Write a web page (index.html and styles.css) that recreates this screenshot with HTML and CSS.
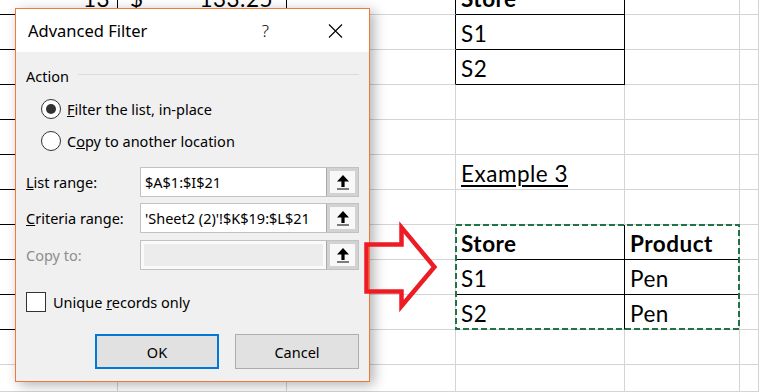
FILE: index.html
```html
<!DOCTYPE html>
<html lang="en">

<head>
    <meta charset="utf-8" />
    <title>Advanced Filter</title>
    <link rel="stylesheet" href="styles.css">
</head>

<body>
    <!-- worksheet -->
    <div class="sheet">
        <div class="cell bk num">13</div>
        <div class="cell bk acct"><span>$</span><span>133.25</span></div>
        <div class="cell bk_r"></div>
        <div class="cell bk bold">Store</div>
        <div class="cell"></div>
        <div class="cell"></div>

        <div class="cell bk"></div>
        <div class="cell bk"></div>
        <div class="cell bk_r"></div>
        <div class="cell bk">S1</div>
        <div class="cell"></div>
        <div class="cell"></div>

        <div class="cell bk"></div>
        <div class="cell bk"></div>
        <div class="cell bk_r"></div>
        <div class="cell bk">S2</div>
        <div class="cell"></div>
        <div class="cell"></div>

        <div class="cell bk"></div>
        <div class="cell bk"></div>
        <div class="cell"></div>
        <div class="cell"></div>
        <div class="cell"></div>
        <div class="cell"></div>

        <div class="cell bk"></div>
        <div class="cell bk"></div>
        <div class="cell"></div>
        <div class="cell"></div>
        <div class="cell"></div>
        <div class="cell"></div>

        <div class="cell bk"></div>
        <div class="cell bk"></div>
        <div class="cell"></div>
        <div class="cell"><u class="heading">Example 3</u></div>
        <div class="cell"></div>
        <div class="cell"></div>

        <div class="cell bk"></div>
        <div class="cell bk"></div>
        <div class="cell"></div>
        <div class="cell"></div>
        <div class="cell"></div>
        <div class="cell"></div>

        <div class="cell bk"></div>
        <div class="cell bk"></div>
        <div class="cell"></div>
        <div class="cell bk bold">Store</div>
        <div class="cell bk_b bold">Product</div>
        <div class="cell"></div>

        <div class="cell bk"></div>
        <div class="cell bk"></div>
        <div class="cell"></div>
        <div class="cell bk">S1</div>
        <div class="cell bk_b">Pen</div>
        <div class="cell"></div>

        <div class="cell bk"></div>
        <div class="cell bk"></div>
        <div class="cell"></div>
        <div class="cell bk_r">S2</div>
        <div class="cell">Pen</div>
        <div class="cell"></div>

        <div class="cell"></div>
        <div class="cell"></div>
        <div class="cell"></div>
        <div class="cell"></div>
        <div class="cell"></div>
        <div class="cell"></div>

        <div class="cell"></div>
        <div class="cell"></div>
        <div class="cell"></div>
        <div class="cell"></div>
        <div class="cell"></div>
        <div class="cell"></div>
    </div>

    <!-- copied range marquee -->
    <svg class="marquee" width="286" height="108" viewBox="0 0 286 108">
        <rect x="1" y="1" width="283" height="104" fill="none" stroke="#217346" stroke-width="2" stroke-dasharray="6 3" />
    </svg>

    <!-- dialog -->
    <div class="dialog">
        <div class="dlg_title">
            <h1>Advanced Filter</h1>
            <span class="help">?</span>
            <svg class="close" width="15" height="14" viewBox="0 0 15 14">
                <path d="M1 0.5 L14 13.5 M14 0.5 L1 13.5" stroke="#000" stroke-width="1.1" fill="none" />
            </svg>
        </div>
        <div class="dlg_body">
            <div class="group_head">
                <span>Action</span>
                <i class="group_line"></i>
            </div>
            <label class="radio_row first">
                <span class="radio checked"></span>
                <span><u>F</u>ilter the list, in-place</span>
            </label>
            <label class="radio_row">
                <span class="radio"></span>
                <span>C<u>o</u>py to another location</span>
            </label>

            <div class="field first">
                <span class="field_label"><u>L</u>ist range:</span>
                <div class="ref_box">
                    <span class="ref_text">$A$1:$I$21</span>
                    <span class="ref_btn"><i><svg width="12" height="15" viewBox="0 0 12 15"><path d="M6 0 L12 6.5 L0 6.5 Z M4.4 6 H7.6 V12 H4.4 Z M0 13.5 H12 V14.5 H0 Z" fill="#000" /></svg></i></span>
                </div>
            </div>
            <div class="field">
                <span class="field_label"><u>C</u>riteria range:</span>
                <div class="ref_box">
                    <span class="ref_text">'Sheet2 (2)'!$K$19:$L$21</span>
                    <span class="ref_btn"><i><svg width="12" height="15" viewBox="0 0 12 15"><path d="M6 0 L12 6.5 L0 6.5 Z M4.4 6 H7.6 V12 H4.4 Z M0 13.5 H12 V14.5 H0 Z" fill="#000" /></svg></i></span>
                </div>
            </div>
            <div class="field last">
                <span class="field_label disabled">Copy to:</span>
                <div class="ref_box off">
                    <span class="ref_text"><i class="ref_fill"></i></span>
                    <span class="ref_btn"><i><svg width="12" height="15" viewBox="0 0 12 15"><path d="M6 0 L12 6.5 L0 6.5 Z M4.4 6 H7.6 V12 H4.4 Z M0 13.5 H12 V14.5 H0 Z" fill="#000" /></svg></i></span>
                </div>
            </div>

            <label class="check_row">
                <span class="check"></span>
                <span>Unique <u>r</u>ecords only</span>
            </label>

            <div class="btn_row">
                <button class="btn default">OK</button>
                <button class="btn">Cancel</button>
            </div>
        </div>
    </div>

    <!-- annotation arrow -->
    <svg class="arrow" width="85" height="105" viewBox="0 0 85 105">
        <path d="M6.5 29.5 L41.5 29.5 L41.5 12.4 L74.4 52 L41.5 91 L41.5 76.5 L6.5 76.5 Z" fill="none" stroke="#ed1c24" stroke-width="4.5" />
    </svg>
</body>

</html>
```

FILE: styles.css
```css
* {
    box-sizing: border-box;
}

html,
body {
    margin: 0;
    padding: 0;
    width: 759px;
    height: 392px;
    overflow: hidden;
    background-color: #fff;
}

body {
    position: relative;
}

/* worksheet */

.sheet {
    display: grid;
    grid-template-columns: 118px 169px 169px 169px 115px 1fr;
    grid-template-rows: 15px repeat(10, 35px) 1fr;
    height: 392px;
    font-family: Lato, "Liberation Sans", sans-serif;
    font-size: 22.5px;
    letter-spacing: 0.5px;
    color: #000;
}

.cell {
    display: flex;
    align-items: flex-end;
    padding: 0 5px 4px;
    line-height: 22px;
    white-space: nowrap;
    overflow: hidden;
    border-right: 1px solid #d4d4d4;
    border-bottom: 1px solid #d4d4d4;
}

.bk {
    border-right-color: #000;
    border-bottom-color: #000;
}

.bk_r {
    border-right-color: #000;
}

.bk_b {
    border-bottom-color: #000;
}

.num {
    justify-content: flex-end;
    padding-right: 7px;
}

.acct {
    justify-content: space-between;
    padding-left: 12px;
    padding-right: 13px;
}

.bold {
    font-weight: 700;
}

.heading {
    text-decoration-thickness: 2px;
    text-underline-offset: 3px;
}

.marquee {
    position: absolute;
    left: 455px;
    top: 224px;
}

/* dialog */

.dialog {
    position: absolute;
    left: 15px;
    top: 8px;
    width: 355px;
    border: 1px solid #f0783a;
    background-color: #f0f0f0;
    box-shadow: 4px 3px 12px rgba(0, 0, 0, 0.3);
    font-family: "Noto Sans", "Open Sans", sans-serif;
    font-size: 14.5px;
    color: #000;
    z-index: 5;
}

.dlg_title {
    height: 43px;
    display: flex;
    align-items: center;
    padding-left: 12px;
    background-color: #fff;
}

.dlg_title h1 {
    flex: 1;
    margin: 0;
    font-size: 16.5px;
    font-weight: normal;
}

.help {
    font-size: 17px;
    margin-right: 59px;
    font-weight: 300;
}

.close {
    margin-right: 26px;
}

.dlg_body {
    padding: 0 10px 12px;
}

.group_head {
    display: flex;
    height: 20px;
    margin-top: 14px;
    line-height: 20px;
}

.group_line {
    flex: 1;
    height: 1px;
    margin: 8px 0 0 9px;
    background-color: #dcdcdc;
}

.radio_row,
.check_row {
    display: flex;
    align-items: center;
    height: 20px;
    margin-top: 12px;
}

.radio_row.first {
    margin-top: 13px;
}

.radio {
    width: 20px;
    height: 20px;
    margin: 0 6px 0 15px;
    border: 1px solid #333;
    border-radius: 50%;
    background-color: #fff;
    display: flex;
    align-items: center;
    justify-content: center;
}

.radio.checked::after {
    content: "";
    width: 10px;
    height: 10px;
    border-radius: 50%;
    background-color: #333;
}

.field {
    display: flex;
    align-items: center;
    height: 30px;
    margin-top: 6px;
}

.field.first {
    margin-top: 16px;
}

.field.last {
    margin-top: 7px;
}

.field_label {
    width: 114px;
}

.field_label.disabled {
    color: #8d8d8d;
}

.ref_box {
    flex: 1;
    height: 30px;
    display: flex;
    border: 1px solid #c2c2c2;
    background-color: #fff;
}

.ref_text {
    flex: 1;
    padding-left: 4px;
    line-height: 28px;
    white-space: nowrap;
    overflow: hidden;
}

.ref_box.off {
    background-color: #fafafa;
}

.ref_box.off .ref_text {
    padding: 3px;
}

.ref_fill {
    display: block;
    height: 100%;
    background-color: #ececec;
}

.ref_btn {
    width: 32px;
    padding: 3px;
    border-left: 1px solid #a9a9a9;
    background-color: #d2d2d2;
}

.ref_btn i {
    display: flex;
    height: 100%;
    align-items: center;
    justify-content: center;
    background-color: #f8f8f8;
}

.check_row {
    margin-top: 22px;
}

.check {
    width: 20px;
    height: 20px;
    margin-right: 7px;
    border: 1px solid #333;
    background-color: #fff;
}

.btn_row {
    display: flex;
    justify-content: flex-end;
    gap: 16px;
    margin-top: 22px;
}

.btn {
    width: 124px;
    height: 35px;
    margin: 0;
    padding: 0;
    border: 1px solid #adadad;
    background-color: #e1e1e1;
    font-family: inherit;
    font-size: 14.5px;
    color: #000;
}

.btn.default {
    border: 2px solid #0078d7;
}

/* annotation */

.arrow {
    position: absolute;
    left: 360px;
    top: 215px;
    z-index: 10;
}
```
